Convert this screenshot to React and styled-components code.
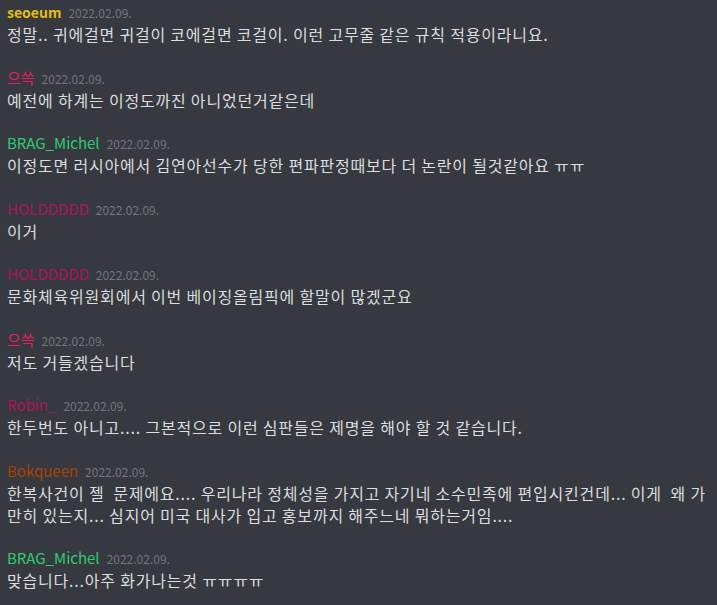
import React from "react";
import styled, { createGlobalStyle } from "styled-components";

const Global = createGlobalStyle`
  html, body { margin: 0; padding: 0; background: #36393f; }
  body { font-family: "Noto Sans CJK KR", "Noto Sans", sans-serif; }
`;

const Page = styled.div`
  width: 717px;
  height: 605px;
  box-sizing: border-box;
  background: #36393f;
  padding: 2px 7px 0 7px;
  display: flex;
  flex-direction: column;
  gap: 22.5px;
  overflow: hidden;
`;

const Message = styled.div`
  display: flex;
  flex-direction: column;
  gap: 1px;
`;

const Header = styled.div`
  display: flex;
  align-items: baseline;
  gap: 7px;
  height: 20px;
  line-height: 20px;
`;

const Name = styled.span`
  font-size: ${(p) => (p.$bold ? "14px" : "15px")};
  font-weight: ${(p) => (p.$bold ? 600 : 400)};
  color: ${(p) => p.$color};
`;

const Time = styled.span`
  font-size: 12px;
  color: #72767d;
`;

const Text = styled.div`
  font-size: 16px;
  letter-spacing: 0.8px;
  line-height: 22px;
  color: #dcddde;
  white-space: pre-wrap;
`;

const messages = [
  { name: "seoeum", color: "#e4be0e", bold: true, text: "정말.. 귀에걸면 귀걸이 코에걸면 코걸이. 이런 고무줄 같은 규칙 적용이라니요." },
  { name: "으쓱", color: "#e91e63", text: "예전에 하계는 이정도까진 아니었던거같은데" },
  { name: "BRAG_Michel", color: "#2ecc71", text: "이정도면 러시아에서 김연아선수가 당한 편파판정때보다 더 논란이 될것같아요 ㅠㅠ" },
  { name: "HOLDDDDD", color: "#ad1457", text: "이거" },
  { name: "HOLDDDDD", color: "#ad1457", text: "문화체육위원회에서 이번 베이징올림픽에 할말이 많겠군요" },
  { name: "으쓱", color: "#e91e63", text: "저도 거들겠습니다" },
  { name: "Robin_", color: "#ad1457", text: "한두번도 아니고.... 그본적으로 이런 심판들은 제명을 해야 할 것 같습니다." },
  { name: "Bokqueen", color: "#a84300", text: "한복사건이 젤  문제에요.... 우리나라 정체성을 가지고 자기네 소수민족에 편입시킨건데... 이게  왜 가만히 있는지... 심지어 미국 대사가 입고 홍보까지 해주느네 뭐하는거임...." },
  { name: "BRAG_Michel", color: "#2ecc71", text: "맞습니다...아주 화가나는것 ㅠㅠㅠㅠ" },
];

export default function App() {
  return (
    <>
      <Global />
      <Page>
        {messages.map((m, i) => (
          <Message key={i}>
            <Header>
              <Name $color={m.color} $bold={m.bold}>{m.name}</Name>
              <Time>2022.02.09.</Time>
            </Header>
            <Text>{m.text}</Text>
          </Message>
        ))}
      </Page>
    </>
  );
}
